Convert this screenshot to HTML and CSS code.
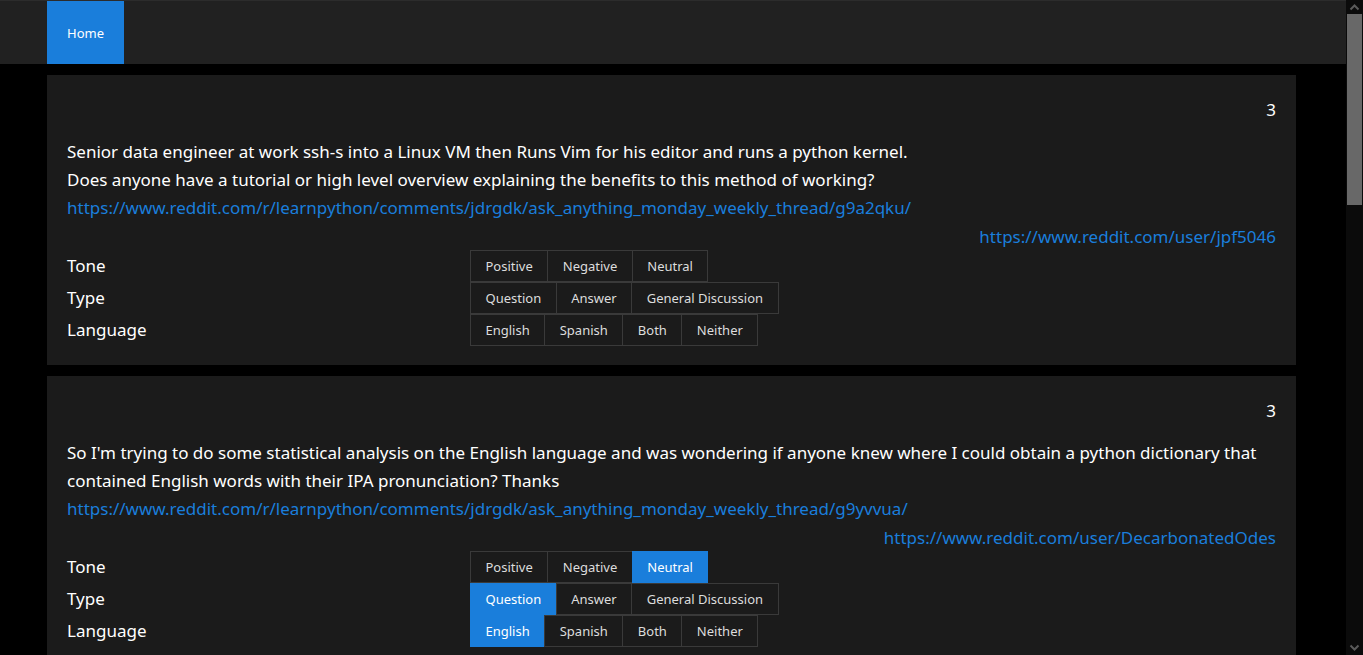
FILE: index.html
```html
<!DOCTYPE html>
<html lang="en">
<head>
<meta charset="utf-8">
<title>Labeler</title>
<link rel="stylesheet" href="styles.css">
</head>
<body>
<div class="viewport">
<nav class="navbar">
  <div class="container nav-inner">
    <a class="nav-link active" href="#">Home</a>
  </div>
</nav>
<main class="container">
  <section class="card">
    <div class="score">3</div>
    <p class="body-text">Senior data engineer at work ssh-s into a Linux VM then Runs Vim for his editor and runs a python kernel.<br>Does anyone have a tutorial or high level overview explaining the benefits to this method of working?</p>
    <a class="link" href="#">https://www.reddit.com/r/learnpython/comments/jdrgdk/ask_anything_monday_weekly_thread/g9a2qku/</a>
    <div class="user"><a class="link" href="#">https://www.reddit.com/user/jpf5046</a></div>
    <div class="row"><div class="label">Tone</div><div class="group"><button class="btn">Positive</button><button class="btn">Negative</button><button class="btn">Neutral</button></div></div>
    <div class="row"><div class="label">Type</div><div class="group"><button class="btn">Question</button><button class="btn">Answer</button><button class="btn">General Discussion</button></div></div>
    <div class="row"><div class="label">Language</div><div class="group"><button class="btn">English</button><button class="btn">Spanish</button><button class="btn">Both</button><button class="btn">Neither</button></div></div>
  </section>
  <section class="card">
    <div class="score">3</div>
    <p class="body-text">So I'm trying to do some statistical analysis on the English language and was wondering if anyone knew where I could obtain a python dictionary that contained English words with their IPA pronunciation? Thanks</p>
    <a class="link" href="#">https://www.reddit.com/r/learnpython/comments/jdrgdk/ask_anything_monday_weekly_thread/g9yvvua/</a>
    <div class="user"><a class="link" href="#">https://www.reddit.com/user/DecarbonatedOdes</a></div>
    <div class="row"><div class="label">Tone</div><div class="group"><button class="btn">Positive</button><button class="btn">Negative</button><button class="btn on">Neutral</button></div></div>
    <div class="row"><div class="label">Type</div><div class="group"><button class="btn on">Question</button><button class="btn">Answer</button><button class="btn">General Discussion</button></div></div>
    <div class="row"><div class="label">Language</div><div class="group"><button class="btn on">English</button><button class="btn">Spanish</button><button class="btn">Both</button><button class="btn">Neither</button></div></div>
  </section>
</main>
</div>
<div class="scrollbar" aria-hidden="true">
  <div class="sb-btn">
    <svg width="17" height="14" viewBox="0 0 17 14"><path d="M4.5 9.5 L8.5 5.5 L12.5 9.5" fill="none" stroke="#5a5a5a" stroke-width="2"/></svg>
  </div>
  <div class="sb-thumb"></div>
  <div class="sb-track"></div>
  <div class="sb-btn">
    <svg width="17" height="14" viewBox="0 0 17 14"><path d="M4.5 4.5 L8.5 8.5 L12.5 4.5" fill="none" stroke="#5a5a5a" stroke-width="2"/></svg>
  </div>
</div>
</body>
</html>
```
FILE: styles.css
```css
html {
  background: #000;
}
body {
  margin: 0;
  height: 100vh;
  overflow: hidden;
  display: flex;
  background: #000;
  color: #fff;
  font-family: "Noto Sans", "Open Sans", sans-serif;
  font-size: 17px;
  line-height: 28px;
}
.viewport {
  flex: 1;
  min-width: 0;
  overflow: hidden;
}
.scrollbar {
  width: 17px;
  flex: none;
  display: flex;
  flex-direction: column;
  background: #0b0b0b;
}
.sb-btn {
  height: 14px;
  flex: none;
}
.sb-btn svg {
  display: block;
}
.sb-thumb {
  height: 191px;
  margin: 0 1px 0 1px;
  background: #686868;
  flex: none;
}
.sb-track {
  flex: 1;
}
.container {
  width: 1249px;
  margin: 0 auto;
  padding-right: 3px;
}
.navbar {
  background: #212121;
  border-top: 1px solid #2c2c2c;
  height: 63px;
  margin-bottom: 11px;
}
.nav-inner {
  display: flex;
  height: 100%;
}
.nav-link {
  display: flex;
  align-items: center;
  padding: 0 20px;
  background: #1a7edb;
  color: #fff;
  text-decoration: none;
  font-size: 13px;
}
.card {
  background: #1b1b1b;
  padding: 21px 20px 19px;
  margin-bottom: 11px;
  display: flex;
  flex-direction: column;
}
.score {
  text-align: right;
  margin-bottom: 14px;
}
.body-text {
  margin: 0;
}
.link {
  color: #1a7edb;
  text-decoration: none;
  align-self: flex-start;
}
.user {
  text-align: right;
  margin-top: 1px;
  margin-bottom: -1px;
}
.row {
  display: grid;
  grid-template-columns: 403px 1fr;
  height: 32px;
  align-items: center;
}
.label {
  font-size: 17px;
}
.group {
  display: flex;
  height: 32px;
}
.btn {
  font-family: inherit;
  font-size: 13px;
  color: #ddd;
  background: #1b1b1b;
  border: 1px solid #3a3a3a;
  margin-left: -1px;
  padding: 0 14.5px;
  height: 32px;
  cursor: pointer;
}
.btn:first-child {
  margin-left: 0;
}
.btn.on {
  background: #1a7edb;
  border-color: #1a7edb;
  color: #fff;
}
```
